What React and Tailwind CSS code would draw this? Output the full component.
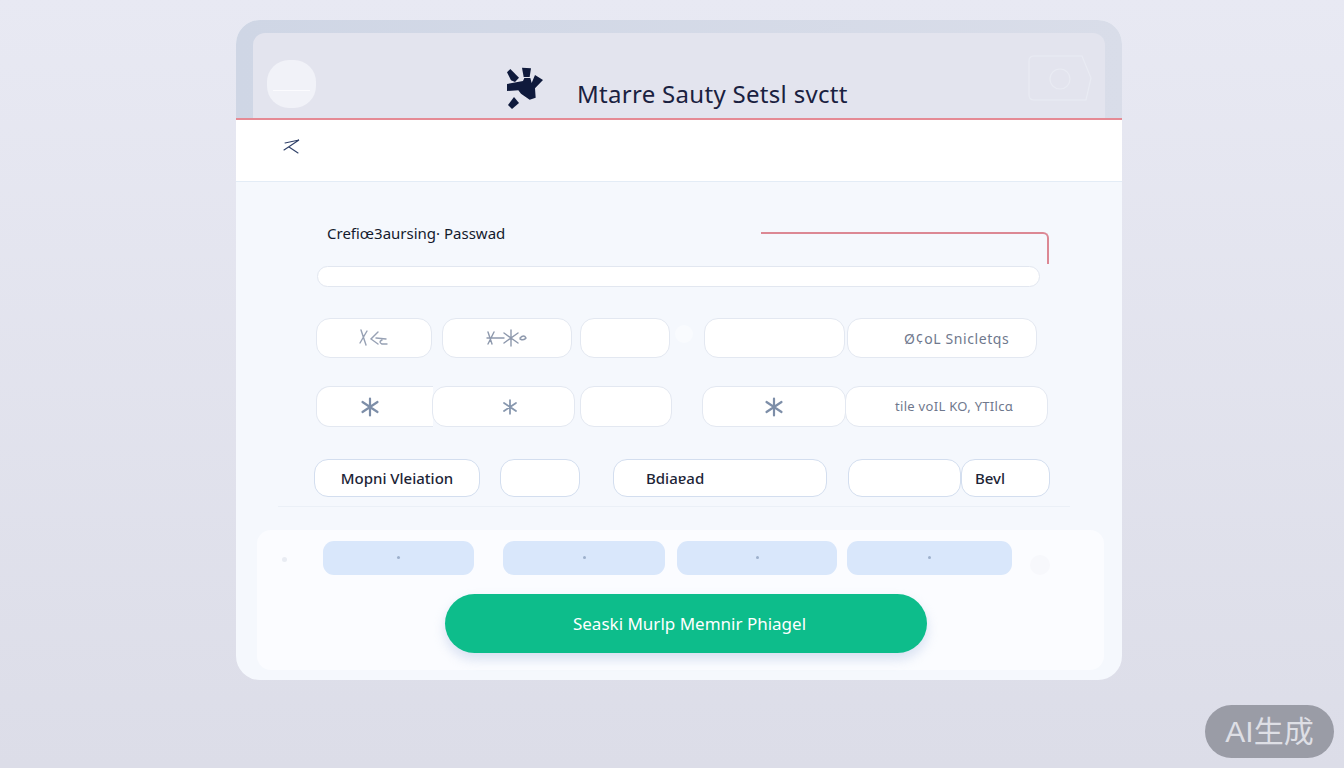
const fieldClass = "h-full bg-white border border-[#e3e8f1] rounded-[14px] flex items-center justify-center shrink-0";
const strongClass = "h-full bg-white border border-[#d3deef] rounded-[14px] flex items-center shrink-0 text-[15px] font-medium text-[#1c2436]";

function Logo() {
  return (
    <svg width="70" height="65" viewBox="0 0 210 195" className="shrink-0" fill="#0f1a3c">
      <polygon points="36,52 46,42 72,68 60,81 48,76" />
      <polygon points="81,38 108,40 104,66 86,66" />
      <polygon points="36,87 84,78 88,69 106,69 110,84 120,60 144,75 120,100 122,128 104,134 78,116 70,106 36,108" />
      <polygon points="39,150 57,126 72,144 51,162" />
    </svg>
  );
}

function Spark({ size = 20, color = "#7d8ea8" }) {
  return (
    <svg width={size} height={size} viewBox="0 0 20 20" stroke={color} strokeWidth="2.2" strokeLinecap="round" fill="none">
      <path d="M10 1.5 L10 18.5 M2.5 5 L17.5 15 M17.5 5 L2.5 15" />
    </svg>
  );
}

function ScribbleA() {
  return (
    <svg width="32" height="20" viewBox="0 0 32 20" stroke="#97a1b4" strokeWidth="1.4" fill="none" strokeLinecap="round">
      <path d="M3 2 L8 17 M9 3 L2 15 M20 4 L13 11 L20 16 M18 10 L28 11 M24 12 Q20 14 24 16 L29 16" />
    </svg>
  );
}

function ScribbleB() {
  return (
    <svg width="42" height="20" viewBox="0 0 42 20" stroke="#8e99ad" strokeWidth="1.4" fill="none" strokeLinecap="round">
      <path d="M2 4 L6 16 M8 4 L2 16 M1 10 L18 10 M25 2 L25 18 M18 5 L32 15 M32 5 L18 15 M34 10 Q38 6 40 10 Q38 13 34 11" />
    </svg>
  );
}

function Pill({ width, ml }) {
  return (
    <div className={`${width} ${ml} h-[34px] rounded-[11px] bg-[#d9e7fb] flex items-center justify-center pb-[2px] shrink-0`}>
      <div className="w-[3px] h-[3px] rounded-full bg-[#9db0cc]" />
    </div>
  );
}

export default function App() {
  return (
    <div className="relative h-[768px] overflow-hidden bg-gradient-to-b from-[#e8e9f3] to-[#dcdde8] pt-[20px] pl-[236px] font-['Noto_Sans',sans-serif]">
      <div className="w-[886px] h-[660px] rounded-[24px] overflow-hidden bg-[#f5f8fd] flex flex-col">
        {/* header */}
        <div className="h-[100px] shrink-0 bg-gradient-to-r from-[#cfd6e5] to-[#d9dde9] pt-[13px] px-[17px] border-b-2 border-[#e58a94]">
          <div className="h-[85px] rounded-t-[12px] bg-[#e3e4ee] flex pl-[14px] pr-[13px]">
            <div className="w-[49px] h-[48px] mt-[27px] rounded-[22px] bg-[#f1f2f8] flex flex-col justify-center shrink-0">
              <div className="h-px mx-[6px] mt-[12px] bg-[#fbfbfe]" />
            </div>
            <div className="ml-[179px] mt-[22px]">
              <Logo />
            </div>
            <div className="ml-[12px] mt-[44px] text-[24px] leading-[34px] tracking-[0.3px] text-[#1a2140] whitespace-nowrap">
              Mtarre Sauty Setsl svctt
            </div>
            <svg width="64" height="46" viewBox="0 0 64 46" fill="none" stroke="#e9ebf3" strokeWidth="1.2" className="ml-auto mt-[22px] shrink-0">
              <path d="M6 1 H54 L63 23 L58 45 H6 Q1 45 1 40 V6 Q1 1 6 1 Z" />
              <circle cx="32" cy="24" r="10" />
            </svg>
          </div>
        </div>

        {/* toolbar */}
        <div className="h-[62px] shrink-0 bg-white border-b border-[#e3ecf6] pt-[18px] pl-[47px]">
          <svg width="18" height="16" viewBox="0 0 18 16" fill="none" stroke="#2f4068" strokeWidth="1.1" strokeLinecap="round">
            <path d="M2 5 L16 2 L1 12 M6 9 L15 15" />
          </svg>
        </div>

        {/* form */}
        <div className="flex-1 flex flex-col">
          <div className="mt-[40px] ml-[91px] w-[722px] h-[44px] flex justify-between">
            <div className="text-[15px] leading-[22px] text-[#141b2d] whitespace-nowrap">
              Crefiœ3aursing· Passwad
            </div>
            <div className="w-[288px] h-[32px] mt-[10px] border-t-2 border-r-2 border-[#dc8894] rounded-tr-[6px]" />
          </div>
          <div className="ml-[81px] w-[723px] h-[21px] bg-white border border-[#e2e7f0] rounded-full" />

          <div className="mt-[31px] ml-[80px] h-[40px] flex">
            <div className={`${fieldClass} w-[116px]`}><ScribbleA /></div>
            <div className={`${fieldClass} w-[130px] ml-[10px]`}><ScribbleB /></div>
            <div className={`${fieldClass} w-[90px] ml-[8px]`} />
            <div className="w-[18px] h-[18px] ml-[5px] mt-[7px] rounded-full bg-[#f9fbfe] shrink-0" />
            <div className={`${fieldClass} w-[141px] ml-[11px]`} />
            <div className={`${fieldClass} w-[190px] ml-[2px] pl-[56px] !justify-start text-[14px] tracking-[0.6px] text-[#6f788d] whitespace-nowrap`}>
              Ø¢oL Snicletqs
            </div>
          </div>

          <div className="mt-[28px] ml-[80px] h-[41px] flex">
            <div className={`${fieldClass} w-[117px] pr-[10px] rounded-r-none border-r-0`}><Spark /></div>
            <div className={`${fieldClass} w-[143px] -ml-[1px] pl-[12px]`}><Spark size={16} color="#8797ae" /></div>
            <div className={`${fieldClass} w-[92px] ml-[5px]`} />
            <div className={`${fieldClass} w-[144px] ml-[30px]`}><Spark /></div>
            <div className={`${fieldClass} w-[203px] -ml-[1px] pl-[49px] !justify-start text-[13px] tracking-[0.3px] text-[#6f788d] whitespace-nowrap`}>
              tile voIL KO, YTIlcɑ
            </div>
          </div>

          <div className="mt-[32px] ml-[78px] h-[38px] flex">
            <div className={`${strongClass} w-[166px] justify-center`}>Mopni Vleiation</div>
            <div className={`${strongClass} w-[80px] ml-[20px]`} />
            <div className={`${strongClass} w-[214px] ml-[33px] pl-[32px]`}>Bdiaɐad</div>
            <div className={`${strongClass} w-[113px] ml-[21px]`} />
            <div className={`${strongClass} w-[89px] pl-[13px]`}>Bevl</div>
          </div>

          <div className="mt-[9px] ml-[42px] w-[792px] h-px bg-[#ebf0f7]" />

          <div className="mt-[23px] ml-[21px] w-[847px] h-[140px] rounded-[14px] bg-[#fbfcff] flex flex-col">
            <div className="pt-[11px] flex items-start">
              <div className="w-[5px] h-[5px] mt-[16px] ml-[25px] rounded-full bg-[#e9ecf3] shrink-0" />
              <Pill width="w-[151px]" ml="ml-[36px]" />
              <Pill width="w-[162px]" ml="ml-[29px]" />
              <Pill width="w-[160px]" ml="ml-[12px]" />
              <Pill width="w-[165px]" ml="ml-[10px]" />
              <div className="w-[20px] h-[20px] mt-[14px] ml-[18px] rounded-full bg-[#f7f8fc] shrink-0" />
            </div>
            <button className="mt-[19px] ml-[188px] w-[482px] h-[59px] pl-[7px] rounded-full bg-[#0dbd8b] text-white text-[17px] shadow-[0_6px_12px_rgba(170,190,225,0.45)]">
              Seaski Murlp Memnir Phiagel
            </button>
          </div>
        </div>
      </div>

      <div className="absolute left-[1205px] top-[705px] w-[129px] h-[53px] rounded-full bg-[#9a9ca6] text-[#dedfe5] text-[30px] flex items-center justify-center font-['Liberation_Sans','Noto_Sans_CJK_SC',sans-serif]">
        AI生成
      </div>
    </div>
  );
}
